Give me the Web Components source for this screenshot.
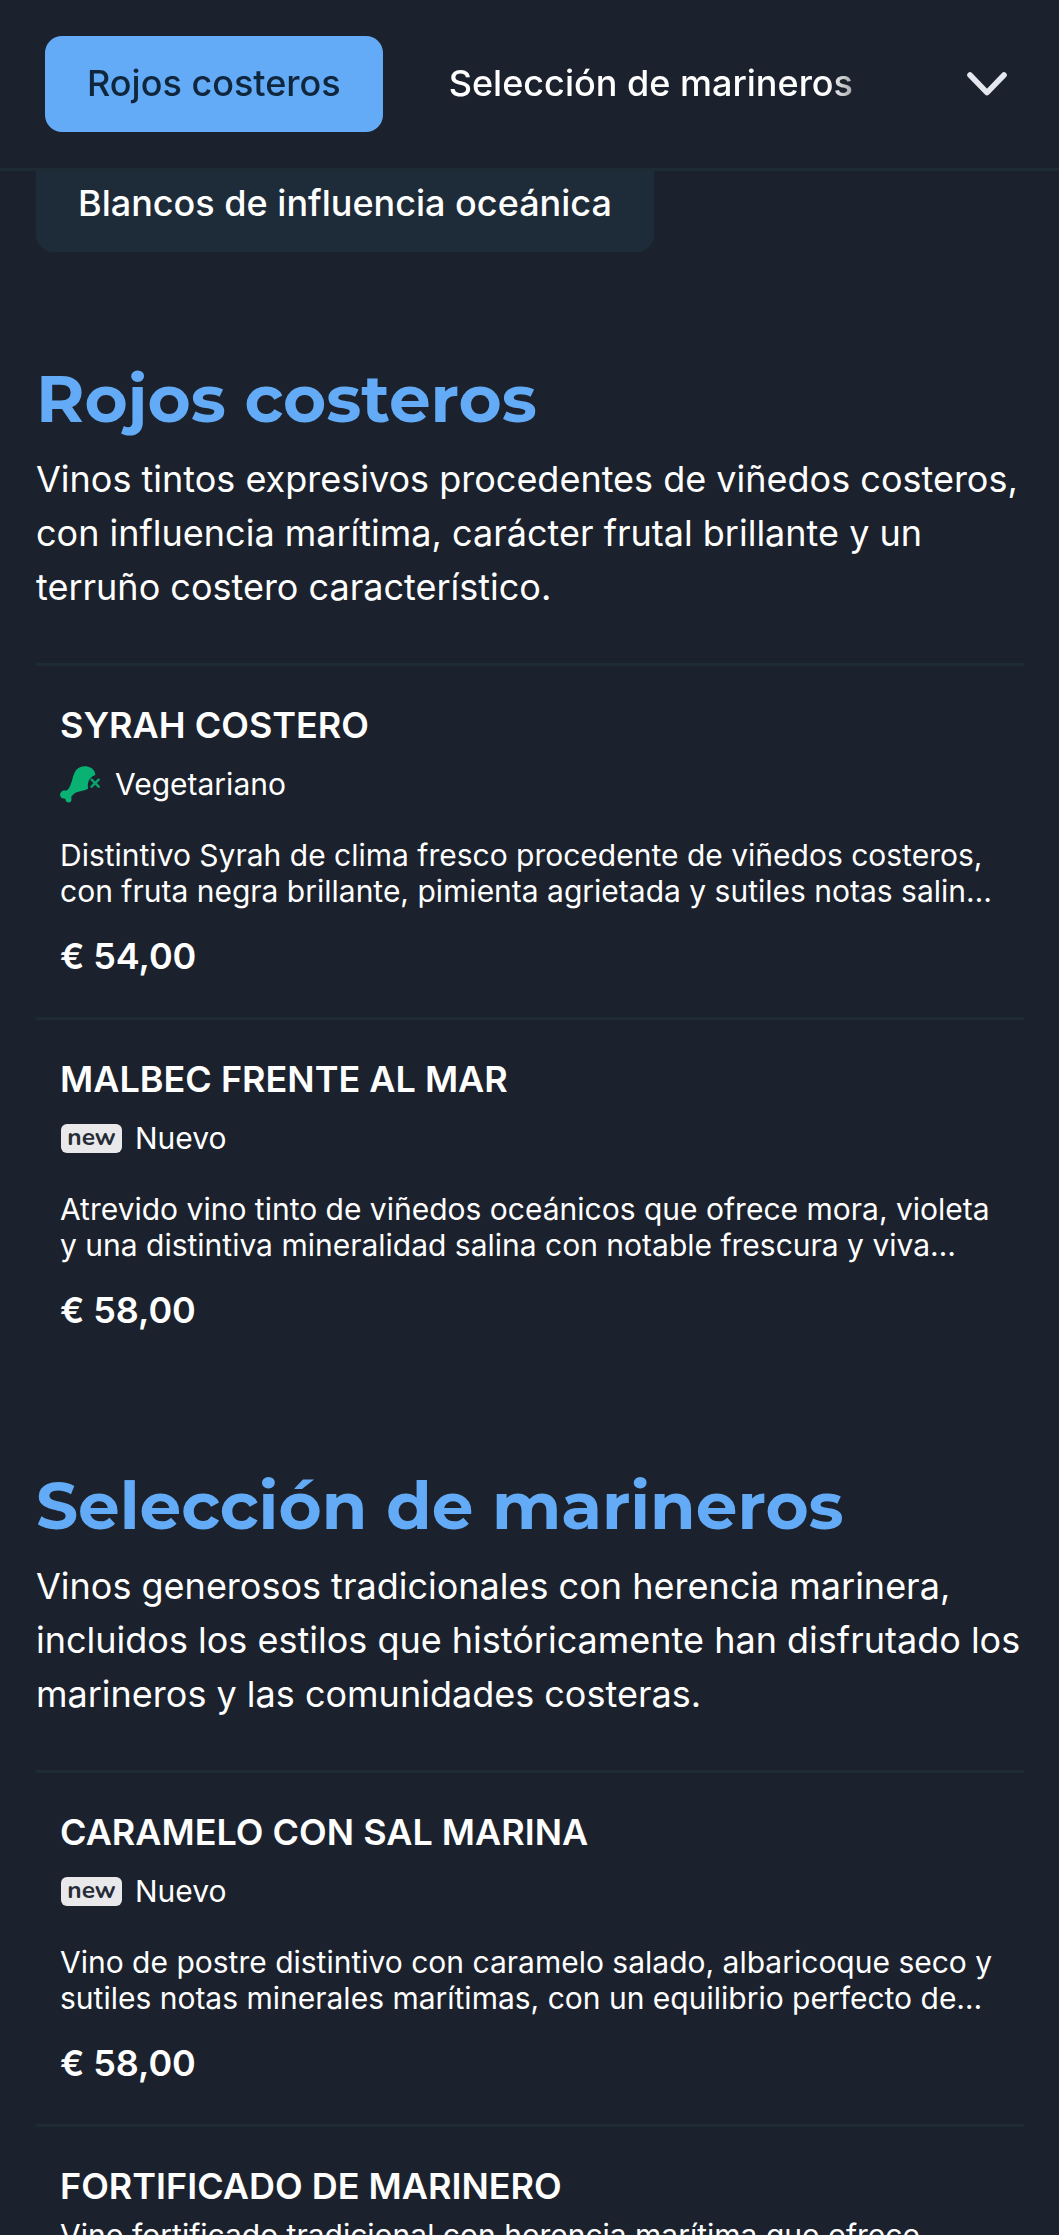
<!DOCTYPE html>
<html lang="es">
<head>
<meta charset="utf-8">
<title>Carta de vinos</title>
<style>
html { background: #1c222d; }
body {
  margin: 0; height: 2235px; overflow: hidden;
  background: #1c222d; color: #fff;
  font: 400 36px/54px Inter, "Liberation Sans", sans-serif;
  --accent: #63abf6; --panel: #1e2b38; --line: #1c2b34; --bg: #1c222d;
}
</style>
</head>
<body>
<menu-page>
  <menu-header slot="header">
    <category-chip active>Rojos costeros</category-chip>
    <category-chip>Selección de marineros</category-chip>
  </menu-header>
  <category-chip filled>Blancos de influencia oceánica</category-chip>

  <menu-section name="Rojos costeros">
    <span slot="intro">Vinos tintos expresivos procedentes de viñedos costeros,<br>con influencia marítima, carácter frutal brillante y un<br>terruño costero característico.</span>
    <menu-item name="SYRAH COSTERO" price="€ 54,00">
      <item-tag slot="tag" kind="veg">Vegetariano</item-tag>
      Distintivo Syrah de clima fresco procedente de viñedos costeros,<br>con fruta negra brillante, pimienta agrietada y sutiles notas salin…
    </menu-item>
    <menu-item name="MALBEC FRENTE AL MAR" price="€ 58,00">
      <item-tag slot="tag" kind="new">Nuevo</item-tag>
      Atrevido vino tinto de viñedos oceánicos que ofrece mora, violeta<br>y una distintiva mineralidad salina con notable frescura y viva…
    </menu-item>
  </menu-section>

  <menu-section name="Selección de marineros">
    <span slot="intro">Vinos generosos tradicionales con herencia marinera,<br>incluidos los estilos que históricamente han disfrutado los<br>marineros y las comunidades costeras.</span>
    <menu-item name="CARAMELO CON SAL MARINA" price="€ 58,00">
      <item-tag slot="tag" kind="new">Nuevo</item-tag>
      Vino de postre distintivo con caramelo salado, albaricoque seco y<br>sutiles notas minerales marítimas, con un equilibrio perfecto de…
    </menu-item>
    <menu-item name="FORTIFICADO DE MARINERO">
      Vino fortificado tradicional con herencia marítima que ofrece
    </menu-item>
  </menu-section>
</menu-page>

<script>
class BaseElement extends HTMLElement {
  connectedCallback() {
    if (this.shadowRoot) return;
    this.attachShadow({ mode: 'open' }).innerHTML = this.view();
  }
}

customElements.define('menu-page', class extends BaseElement {
  view() {
    return `<style>
      :host { display: flex; flex-direction: column; height: 2235px; overflow: hidden; }
      main { display: flex; flex-direction: column; align-items: stretch; flex: none;
             padding: 0 35px 0 36px; margin-top: -15px; }
    </style>
    <slot name="header"></slot>
    <main><slot></slot></main>`;
  }
});

customElements.define('menu-header', class extends BaseElement {
  view() {
    return `<style>
      :host { display: flex; align-items: center; flex: none; box-sizing: border-box; height: 171px;
              padding: 0 52px 0 45px; background: var(--bg); border-bottom: 3px solid var(--line);
              position: relative; z-index: 1; }
      nav { display: flex; gap: 24px; flex: none; width: 850px; overflow: hidden;
            -webkit-mask-image: linear-gradient(90deg, #000 0 782px, transparent 850px);
            mask-image: linear-gradient(90deg, #000 0 782px, transparent 850px); }
      svg { display: block; margin-left: auto; }
    </style>
    <nav><slot></slot></nav>
    <svg width="40" height="24" viewBox="0 0 40 24" fill="none" stroke="#e5e7ee" stroke-width="5.6" stroke-linecap="round" stroke-linejoin="round"><path d="M3 3 20 20.6 37 3"/></svg>`;
  }
});

customElements.define('category-chip', class extends BaseElement {
  view() {
    return `<style>
      :host { display: flex; align-items: center; flex: none; align-self: flex-start;
              height: 96px; padding: 0 42px; border-radius: 17px; font-weight: 500;
              line-height: 54px; white-space: nowrap; box-sizing: border-box; }
      :host([active]) { background: var(--accent); color: #10263c; }
      :host([filled]) { background: var(--panel); }
      span { margin-top: -3px; }
    </style><span><slot></slot></span>`;
  }
});

customElements.define('menu-section', class extends BaseElement {
  view() {
    return `<style>
      :host { display: block; margin-top: 107px; }
      :host(:nth-of-type(n+2)) { margin-top: 95px; }
      h2 { margin: 0; font: 700 66px/80px Montserrat, Lato, sans-serif; color: var(--accent); white-space: nowrap; }
      p { margin: 13px 0 49px; white-space: nowrap; }
    </style>
    <h2>${this.getAttribute('name')}</h2>
    <p><slot name="intro"></slot></p>
    <slot></slot>`;
  }
});

customElements.define('menu-item', class extends BaseElement {
  view() {
    const price = this.getAttribute('price');
    return `<style>
      :host { display: flex; flex-direction: column; box-sizing: border-box; height: 354px;
              border-top: 3px solid var(--line); padding: 37px 24px 0; white-space: nowrap; }
      h3, .price { margin: 0; font-size: 36px; line-height: 44px; font-weight: 600; }
      .desc { margin-top: 9px; font-size: 30px; line-height: 36px; }
      .price { margin-top: 25px; letter-spacing: -.1px; }
    </style>
    <h3>${this.getAttribute('name')}</h3>
    <slot name="tag"></slot>
    <div class="desc"><slot></slot></div>
    ${price ? `<div class="price">${price}</div>` : ''}`;
  }
});

customElements.define('item-tag', class extends BaseElement {
  view() {
    const icon = this.getAttribute('kind') === 'veg'
      ? `<svg width="40" height="38" viewBox="0 0 120 114">
          <path fill="#09b273" d="M48 13C57 2 71-1 84 2 98 5 106 16 106 27 94 31 86 40 84 52 83 58 84 62 84 68 74 74 60 75 50 79 43 82 38 87 35 91 32 95 36 98 34 104 31 111 22 111 18 105 16 102 17 100 16 98 13 99 7 98 3 94-2 88 0 79 7 75 13 72 17 75 21 73 27 69 31 58 35 47 39 35 41 22 48 13Z"/>
          <path fill="none" stroke="#09a56c" stroke-width="7" stroke-linecap="round" d="M95 41 116 62M116 41 95 62"/>
        </svg>`
      : `<b>new</b>`;
    return `<style>
      :host { display: flex; align-items: center; height: 36px; margin: 19px 0 26px;
              font-size: 30px; line-height: 36px; }
      svg { display: block; margin: 2px 15px 0 0; }
      b { display: block; box-sizing: border-box; width: 61px; height: 29px; margin: 1px 13px 0 1px; border-radius: 6px;
          background: #e9e9eb; color: #262c36; text-align: center;
          font: 700 24.5px/27px Nunito, Lato, sans-serif; }
    </style>${icon}<span><slot></slot></span>`;
  }
});
</script>
</body>
</html>
